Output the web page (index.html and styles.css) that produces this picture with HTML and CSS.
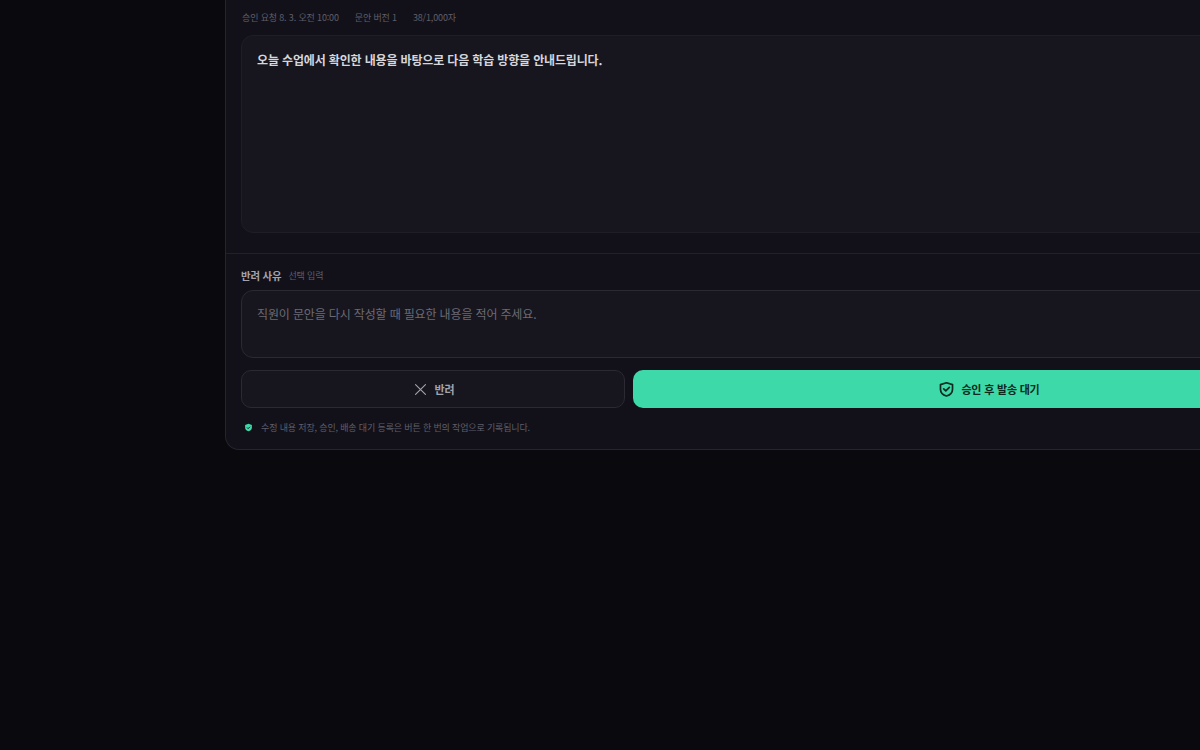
FILE: index.html
```html
<!DOCTYPE html>
<html lang="ko">

<head>
    <meta charset="UTF-8">
    <meta name="viewport" content="width=device-width, initial-scale=1.0">
    <title>승인 요청</title>
    <link rel="stylesheet" href="styles.css">
</head>

<body>
    <main class="card">
        <section class="draft">
            <div class="meta">
                <span>승인 요청 8. 3. 오전 10:00</span>
                <span>문안 버전 1</span>
                <span>38/1,000자</span>
            </div>
            <div class="message">오늘 수업에서 확인한 내용을 바탕으로 다음 학습 방향을 안내드립니다.</div>
        </section>

        <section class="review">
            <div class="reason-label">
                <span class="reason-title">반려 사유</span>
                <span class="reason-hint">선택 입력</span>
            </div>
            <textarea class="reason-input" placeholder="직원이 문안을 다시 작성할 때 필요한 내용을 적어 주세요."></textarea>

            <div class="actions">
                <button class="button reject">
                    <svg class="icon" viewBox="0 0 24 24" fill="none" stroke="currentColor" stroke-width="1.6" stroke-linecap="round">
                        <path d="M5 5l14 14M19 5L5 19" />
                    </svg>
                    반려
                </button>
                <button class="button approve">
                    <svg class="icon" viewBox="0 0 24 24" fill="none" stroke="currentColor" stroke-width="2.400" stroke-linecap="round" stroke-linejoin="round">
                        <path d="M12 2.500l8.500 2.600v6.500c0 5-3.600 8.100-8.500 9.600-4.900-1.500-8.500-4.600-8.500-9.600V5.100z" />
                        <path d="M8 11l3 3 5-5" />
                    </svg>
                    승인 후 발송 대기
                </button>
            </div>

            <p class="note">
                <svg class="note-icon" viewBox="0 0 24 24">
                    <path fill="#3dd9a8" d="M12 2l9 3v7c0 5.500-3.800 8.500-9 10-5.200-1.500-9-4.500-9-10V5z" />
                    <path fill="none" stroke="#12111a" stroke-width="2.500" d="M8 12l3 3 5-5" />
                </svg>
                수정 내용 저장, 승인, 배송 대기 등록은 버튼 한 번의 작업으로 기록됩니다.
            </p>
        </section>
    </main>
</body>

</html>
```

FILE: styles.css
```css
* {
    margin: 0;
    padding: 0;
    box-sizing: border-box;
}

body {
    width: 1200px;
    height: 750px;
    overflow: hidden;
    background: #09090e;
    font-family: "Noto Sans CJK KR", "Noto Sans", sans-serif;
    letter-spacing: -0.15px;
    padding-left: 225px;
}

.card {
    width: 1136px;
    height: 450px;
    background: #12111a;
    border: 1px solid #26252f;
    border-top: none;
    border-radius: 0 0 14px 14px;
}

.draft {
    height: 254px;
    padding: 11px 15px 0;
    border-bottom: 1px solid #22212b;
}

.meta {
    display: flex;
    gap: 16px;
    height: 14px;
    padding-left: 1px;
    font-size: 9px;
    line-height: 14px;
    color: #5f5e69;
}

.message {
    height: 198px;
    margin-top: 10px;
    padding: 13px 15px;
    background: #17161f;
    border: 1px solid #1f1e28;
    border-radius: 12px;
    font-size: 12px;
    font-weight: 600;
    line-height: 21px;
    color: #d6d6dc;
}

.review {
    padding: 13px 15px 0;
}

.reason-label {
    display: flex;
    align-items: center;
    gap: 7px;
    height: 16px;
}

.reason-title {
    font-size: 10.400px;
    font-weight: 700;
    color: #a3a3ac;
}

.reason-hint {
    padding-top: 1px;
    font-size: 9px;
    color: #5f5e69;
}

.reason-input {
    display: block;
    width: 100%;
    height: 68px;
    margin-top: 7px;
    padding: 13px 15px;
    background: #17161f;
    border: 1px solid #2a2934;
    border-radius: 12px;
    outline: none;
    resize: none;
    font-family: inherit;
    font-size: 12px;
    letter-spacing: inherit;
    line-height: 20px;
    color: #d6d6dc;
}

.reason-input::placeholder {
    color: #6b6a74;
}

.actions {
    display: grid;
    grid-template-columns: 384px 712px;
    gap: 8px;
    margin-top: 12px;
}

.button {
    display: flex;
    align-items: center;
    justify-content: center;
    gap: 6px;
    height: 38px;
    border: none;
    border-radius: 10px;
    font-family: inherit;
    font-size: 11px;
    font-weight: 700;
    letter-spacing: -0.2px;
    cursor: pointer;
}

.button.reject {
    background: #17161f;
    border: 1px solid #2a2934;
    color: #a3a3ac;
}

.button.approve {
    background: #3dd9a8;
    color: #0c2a20;
}

.icon {
    width: 17px;
    height: 17px;
}

.note {
    display: flex;
    align-items: center;
    gap: 8px;
    margin-top: 12px;
    padding-left: 3px;
    font-size: 9px;
    line-height: 16px;
    color: #5f5e69;
}

.note-icon {
    width: 9px;
    height: 9px;
    margin-bottom: 2px;
}
```
